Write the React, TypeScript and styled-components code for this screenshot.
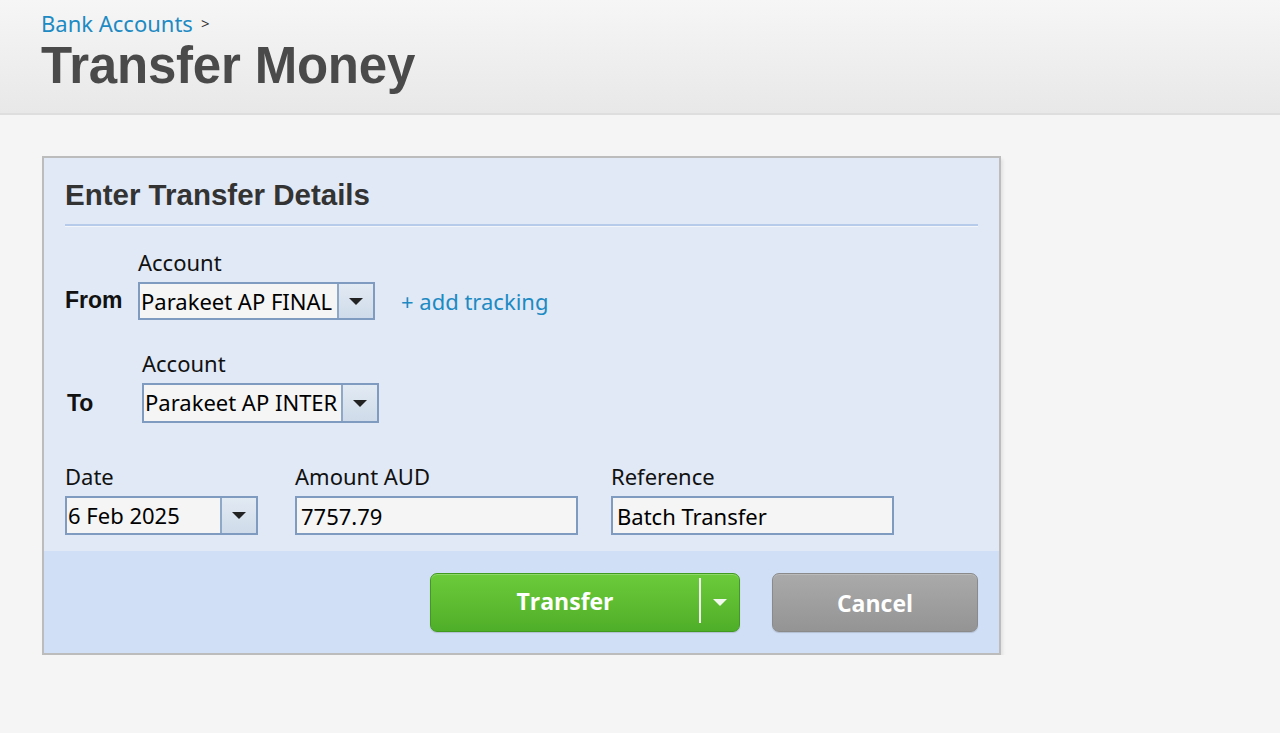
import React from 'react';
import styled, { createGlobalStyle } from 'styled-components';

const GlobalStyle = createGlobalStyle`
  html, body {
    margin: 0;
    padding: 0;
    background: #f4f5f4;
  }
  body {
    font-family: "Noto Sans", "Liberation Sans", sans-serif;
    color: #111;
  }
`;

const Header = styled.header`
  height: 115px;
  box-sizing: border-box;
  padding: 8px 41px 0;
  background: linear-gradient(#f6f6f6, #e8e8e8);
  border-bottom: 2px solid #dedede;
`;

const Crumb = styled.div`
  display: flex;
  align-items: center;
  gap: 8px;
  font-size: 22px;
  line-height: 30px;
`;

const CrumbLink = styled.a`
  color: #1d8ac3;
  text-decoration: none;
`;

const CrumbSep = styled.span`
  color: #333;
  font-size: 15px;
`;

const PageTitle = styled.h1`
  margin: 0;
  font-family: "Liberation Sans", Arial, sans-serif;
  font-weight: 700;
  font-size: 51px;
  line-height: 56px;
  color: #4a4a4a;
  letter-spacing: -0.2px;
`;

const Panel = styled.section`
  width: 959px;
  box-sizing: border-box;
  margin: 41px 0 0 42px;
  background: #e0e9f5;
  border: 2px solid #bcbcbc;
  box-shadow: 2px 3px 3px rgba(0, 0, 0, 0.08);
`;

const PanelBody = styled.div`
  padding: 20px 21px 16px 21px;
`;

const PanelTitle = styled.h2`
  margin: 0;
  font-family: "Liberation Sans", Arial, sans-serif;
  font-size: 29.5px;
  line-height: 34px;
  font-weight: 700;
  color: #333;
  padding-bottom: 12px;
  border-bottom: 2px solid #b6cbea;
  box-shadow: 0 1px 0 #f2f6fb;
`;

const AccountRow = styled.div<{ $top: number; $labelWidth: number; $indent: number }>`
  display: grid;
  grid-template-columns: ${({ $labelWidth }) => $labelWidth}px auto auto 1fr;
  align-items: end;
  margin-top: ${({ $top }) => $top}px;
  padding-left: ${({ $indent }) => $indent}px;
`;

const SideLabel = styled.div<{ $drop: number }>`
  font-family: "Liberation Sans", Arial, sans-serif;
  font-weight: 700;
  font-size: 23px;
  color: #111;
  padding-bottom: ${({ $drop }) => $drop}px;
`;

const FieldStack = styled.div<{ $gap?: number }>`
  display: flex;
  flex-direction: column;
  margin-left: ${({ $gap }) => $gap ?? 0}px;
`;

const FieldLabel = styled.label`
  font-size: 22px;
  line-height: 28px;
  margin-bottom: 6px;
  color: #111;
`;

const SelectBox = styled.div<{ $width: number; $height: number }>`
  display: flex;
  width: ${({ $width }) => $width}px;
  height: ${({ $height }) => $height}px;
  box-sizing: border-box;
  border: 2px solid #7f9cc0;
  background: #f4f5f4;
`;

const SelectText = styled.div`
  flex: 1;
  overflow: hidden;
  white-space: nowrap;
  font-size: 22px;
  line-height: 34px;
  padding-left: 1px;
  color: #000;
`;

const SelectArrow = styled.div`
  width: 34px;
  flex: none;
  border-left: 2px solid #8ea8c8;
  background: linear-gradient(#e2eaf3, #cfdbea);
  display: flex;
  align-items: center;
  justify-content: center;
`;

const Caret = styled.span<{ $color: string }>`
  width: 0;
  height: 0;
  border-left: 7px solid transparent;
  border-right: 7px solid transparent;
  border-top: 7px solid ${({ $color }) => $color};
`;

const TrackingLink = styled.a`
  color: #1d8ac3;
  font-size: 22px;
  line-height: 38px;
  margin-left: 26px;
  text-decoration: none;
  white-space: nowrap;
`;

const DetailsRow = styled.div`
  display: flex;
  margin-top: 39px;
`;

const TextInput = styled.div<{ $width: number }>`
  width: ${({ $width }) => $width}px;
  height: 39px;
  box-sizing: border-box;
  border: 2px solid #7f9cc0;
  background: #f4f5f4;
  font-size: 22px;
  line-height: 37px;
  padding-left: 4px;
  color: #000;
  white-space: nowrap;
`;

const Footer = styled.div`
  background: #d0dff5;
  height: 102px;
  display: flex;
  align-items: center;
  justify-content: flex-end;
  gap: 32px;
  padding-right: 21px;
`;

const SplitButton = styled.div`
  display: flex;
  width: 310px;
  height: 59px;
  box-sizing: border-box;
  border-radius: 7px;
  border: 1px solid #3f9a1f;
  background: linear-gradient(#6ccb3a, #4fae28);
  box-shadow: inset 0 1px 0 rgba(255, 255, 255, 0.25), 0 1px 1px rgba(0, 0, 0, 0.15);
  overflow: hidden;
`;

const ButtonMain = styled.button`
  flex: 1;
  border: none;
  background: transparent;
  color: #fff;
  font-family: "Open Sans", "Noto Sans", sans-serif;
  font-weight: 700;
  font-size: 23px;
  cursor: pointer;
  padding: 0 0 2px;
`;

const ButtonDivider = styled.span`
  width: 2px;
  margin: 4px 0 8px;
  background: #f2f8ee;
`;

const ButtonDrop = styled.button`
  width: 38px;
  border: none;
  background: transparent;
  display: flex;
  align-items: center;
  justify-content: center;
  padding: 0;
  cursor: pointer;
`;

const CancelButton = styled.button`
  width: 206px;
  height: 59px;
  box-sizing: border-box;
  border-radius: 7px;
  border: 1px solid #8a8a8a;
  background: linear-gradient(#aaaaaa, #949494);
  box-shadow: inset 0 1px 0 rgba(255, 255, 255, 0.2), 0 1px 1px rgba(0, 0, 0, 0.15);
  color: #fff;
  font-family: "Open Sans", "Noto Sans", sans-serif;
  font-weight: 700;
  font-size: 23px;
  cursor: pointer;
  padding: 2px 0 0;
`;

const App: React.FC = () => {
  return (
    <>
      <GlobalStyle />
      <Header>
        <Crumb>
          <CrumbLink href="#">Bank Accounts</CrumbLink>
          <CrumbSep>&gt;</CrumbSep>
        </Crumb>
        <PageTitle>Transfer Money</PageTitle>
      </Header>

      <Panel>
        <PanelBody>
          <PanelTitle>Enter Transfer Details</PanelTitle>

          <AccountRow $top={22} $labelWidth={73} $indent={0}>
            <SideLabel $drop={6}>From</SideLabel>
            <FieldStack>
              <FieldLabel>Account</FieldLabel>
              <SelectBox $width={237} $height={38}>
                <SelectText>Parakeet AP FINAL</SelectText>
                <SelectArrow>
                  <Caret $color="#222" />
                </SelectArrow>
              </SelectBox>
            </FieldStack>
            <TrackingLink href="#">+ add tracking</TrackingLink>
          </AccountRow>

          <AccountRow $top={29} $labelWidth={75} $indent={2}>
            <SideLabel $drop={6}>To</SideLabel>
            <FieldStack>
              <FieldLabel>Account</FieldLabel>
              <SelectBox $width={237} $height={40}>
                <SelectText>Parakeet AP INTER</SelectText>
                <SelectArrow>
                  <Caret $color="#222" />
                </SelectArrow>
              </SelectBox>
            </FieldStack>
          </AccountRow>

          <DetailsRow>
            <FieldStack>
              <FieldLabel>Date</FieldLabel>
              <SelectBox $width={193} $height={39}>
                <SelectText>6 Feb 2025</SelectText>
                <SelectArrow>
                  <Caret $color="#222" />
                </SelectArrow>
              </SelectBox>
            </FieldStack>
            <FieldStack $gap={37}>
              <FieldLabel>Amount AUD</FieldLabel>
              <TextInput $width={283}>7757.79</TextInput>
            </FieldStack>
            <FieldStack $gap={33}>
              <FieldLabel>Reference</FieldLabel>
              <TextInput $width={283}>Batch Transfer</TextInput>
            </FieldStack>
          </DetailsRow>
        </PanelBody>

        <Footer>
          <SplitButton>
            <ButtonMain>Transfer</ButtonMain>
            <ButtonDivider />
            <ButtonDrop>
              <Caret $color="#f4f9f0" />
            </ButtonDrop>
          </SplitButton>
          <CancelButton>Cancel</CancelButton>
        </Footer>
      </Panel>
    </>
  );
};

export default App;
